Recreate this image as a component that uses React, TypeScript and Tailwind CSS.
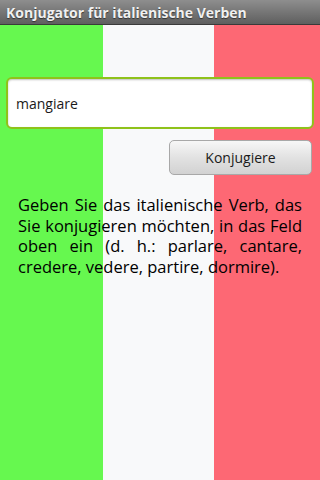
export default function App() {
  return (
    <div className="flex h-[480px] w-[320px] flex-col overflow-hidden font-['Open_Sans',sans-serif]">
      <div className="flex h-[25px] shrink-0 items-center border-b border-[#3a3a3a] bg-gradient-to-b from-[#8e8e8e] to-[#5f5f5f] pl-[6px] text-[14px] font-bold text-[#f0f0f0] [text-shadow:0_1px_1px_#333]">
        Konjugator für italienische Verben
      </div>
      <div className="relative flex-1">
        <div className="absolute inset-0 flex">
          <div className="w-[103px] bg-[#66f84f]" />
          <div className="w-[111px] bg-[#f8f9fa]" />
          <div className="flex-1 bg-[#fd6874]" />
        </div>
        <div className="relative flex flex-col px-[6px] pt-[52px]">
          <div className="flex h-[52px] items-center rounded-[6px] border-2 border-[#8fc21a] bg-white px-[8px] text-[14px] text-[#1a1a1a] shadow-[inset_0_1px_2px_rgba(0,0,0,0.25)]">
            mangiare
          </div>
          <div className="mt-[11px] flex justify-end pr-[2px]">
            <button className="h-[35px] w-[143px] rounded-[5px] border border-[#a8a8a8] bg-gradient-to-b from-[#f7f7f7] via-[#e2e2e2] to-[#d2d2d2] text-[14px] text-[#1a1a1a]">
              Konjugiere
            </button>
          </div>
          <p className="mt-[20px] px-[12px] text-justify text-[16.5px] leading-[20.7px] text-black">
            Geben Sie das italienische Verb, das Sie konjugieren möchten, in das Feld oben ein (d. h.: parlare, cantare, credere, vedere, partire, dormire).
          </p>
        </div>
      </div>
    </div>
  );
}
